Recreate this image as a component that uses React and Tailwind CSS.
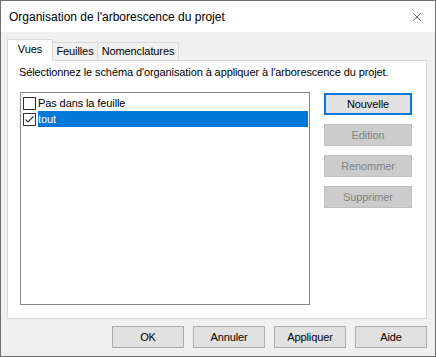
import { X } from 'lucide-react';

// ── Boutons ──────────────────────────────────────────
function SideButton({ label, primary, disabled }) {
  if (primary) {
    return (
      <button className="w-[88px] h-[22px] border-2 border-[#0078d7] bg-[#e1e1e1] text-black">
        {label}
      </button>
    );
  }
  return (
    <button
      disabled={disabled}
      className={`w-[88px] h-[22px] border ${
        disabled ? 'border-[#bfbfbf] bg-[#cccccc] text-[#838383]' : 'border-[#adadad] bg-[#e1e1e1] text-black'
      }`}
    >
      {label}
    </button>
  );
}

function FooterButton({ label }) {
  return (
    <button className="w-[72px] h-[22px] border border-[#adadad] bg-[#e1e1e1] text-black">
      {label}
    </button>
  );
}

// ── Case à cocher ────────────────────────────────────
function CheckBox({ checked }) {
  return (
    <span className="w-[13px] h-[13px] border border-[#333333] bg-white flex items-center justify-center shrink-0">
      {checked && (
        <svg width="11" height="11" viewBox="0 0 11 11">
          <path d="M1.5 5.5 L4 8 L9.5 2.5" fill="none" stroke="#333333" strokeWidth="1.1" />
        </svg>
      )}
    </span>
  );
}

const ITEMS = [
  { label: 'Pas dans la feuille', checked: false, selected: false },
  { label: 'tout', checked: true, selected: true },
];

export default function App() {
  return (
    <div
      className="w-[436px] h-[357px] border border-[#6f6f6f] bg-white flex flex-col text-[11px] tracking-[-0.1px] text-black"
      style={{ fontFamily: '"Liberation Sans", Arial, sans-serif' }}
    >
      {/* Barre de titre */}
      <div className="h-[31px] bg-white flex items-center pl-[8px] pr-[11px] shrink-0">
        <span className="flex-1 text-[12px] tracking-normal">Organisation de l'arborescence du projet</span>
        <X className="w-[14px] h-[14px]" strokeWidth={1} color="#000" />
      </div>

      {/* Corps */}
      <div className="flex-1 bg-[#f0f0f0] flex flex-col pl-[6px] pr-[8px] pt-[7px] pb-[8px]">
        {/* Onglets */}
        <div className="flex items-end h-[21px]">
          <div className="relative z-10 -mb-px h-[22px] w-[46px] bg-white border-x border-t border-[#d9d9d9] flex items-center justify-center pb-[2px]">
            Vues
          </div>
          <div className="h-[18px] w-[45px] bg-[#f0f0f0] border-r border-t border-[#d9d9d9] flex items-center justify-center">
            Feuilles
          </div>
          <div className="h-[18px] w-[81px] bg-[#f0f0f0] border-r border-t border-[#d9d9d9] flex items-center justify-center">
            Nomenclatures
          </div>
        </div>

        {/* Panneau */}
        <div className="h-[259px] bg-white border border-[#d9d9d9] pl-[12px] pt-[4px]">
          <p className="h-[15px] leading-[15px] -ml-px">
            Sélectionnez le schéma d'organisation à appliquer à l'arborescence du projet.
          </p>
          <div className="flex mt-[12px]">
            <div className="w-[290px] h-[213px] border border-[#828790] bg-white pt-[2px] pl-[2px] pr-[1px]">
              {ITEMS.map((item) => (
                <div key={item.label} className="flex items-center h-[16px]">
                  <CheckBox checked={item.checked} />
                  <span
                    className={`flex-1 h-[16px] leading-[16px] ml-[2px] ${
                      item.selected ? 'bg-[#0078d7] text-white' : ''
                    }`}
                  >
                    {item.label}
                  </span>
                </div>
              ))}
            </div>
            <div className="flex flex-col gap-[9px] ml-[14px] mt-px">
              <SideButton label="Nouvelle" primary />
              <SideButton label="Edition" disabled />
              <SideButton label="Renommer" disabled />
              <SideButton label="Supprimer" disabled />
            </div>
          </div>
        </div>

        {/* Boutons du bas */}
        <div className="flex justify-end gap-[9px] mt-[7px]">
          <FooterButton label="OK" />
          <FooterButton label="Annuler" />
          <FooterButton label="Appliquer" />
          <FooterButton label="Aide" />
        </div>
      </div>
    </div>
  );
}
